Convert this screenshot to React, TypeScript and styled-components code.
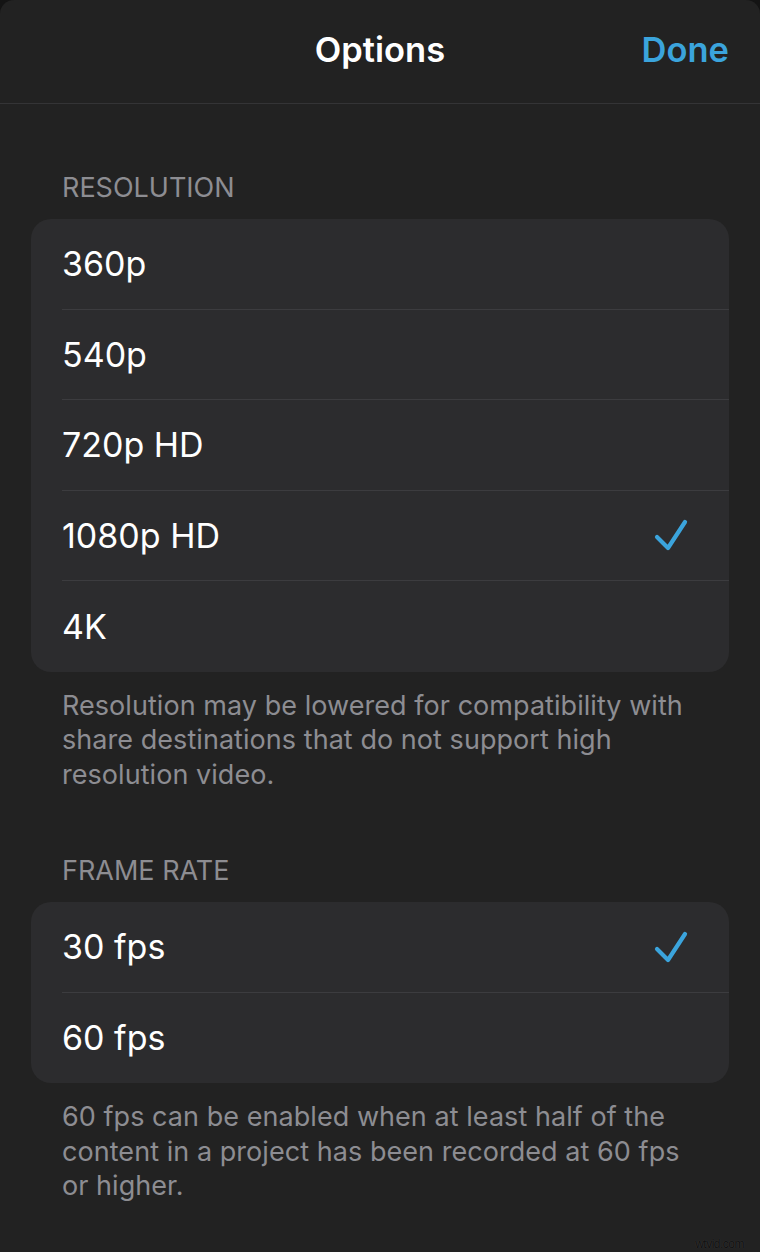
import React from "react";
import styled, { createGlobalStyle } from "styled-components";

const Global = createGlobalStyle`
  html, body { margin: 0; padding: 0; background: #141414; }
  body { font-family: Inter, "Noto Sans", "Liberation Sans", sans-serif; -webkit-font-smoothing: antialiased; }
  * { box-sizing: border-box; }
`;

const Sheet = styled.div`
  position: relative;
  min-height: 1252px;
  background: #222222;
  border-radius: 14px 14px 0 0;
  overflow: hidden;
`;

const NavBar = styled.header`
  height: 104px;
  display: grid;
  grid-template-columns: 1fr auto 1fr;
  align-items: center;
  padding: 0 31px 4px 31px;
  border-bottom: 1.5px solid #343436;
`;

const Title = styled.h1`
  grid-column: 2;
  margin: 0;
  font-size: 34.5px;
  font-weight: 600;
  color: #ffffff;
  letter-spacing: 0;
`;

const DoneButton = styled.button`
  grid-column: 3;
  justify-self: end;
  background: none;
  border: none;
  padding: 0;
  font-family: inherit;
  font-size: 34.5px;
  font-weight: 600;
  color: #3ba4dc;
  letter-spacing: 0;
`;

const Content = styled.main`
  padding: 68px 31px 0 31px;
  display: flex;
  flex-direction: column;
`;

const Section = styled.section<{ $gapTop?: number }>`
  display: flex;
  flex-direction: column;
  margin-top: ${(p) => p.$gapTop ?? 0}px;
`;

const SectionLabel = styled.div`
  padding-left: 31px;
  font-size: 27px;
  line-height: 32px;
  color: #8d8d92;
  letter-spacing: 0;
  margin-bottom: 15px;
`;

const Card = styled.div`
  background: #2c2c2e;
  border-radius: 20px;
  overflow: hidden;
`;

const Row = styled.div<{ $last?: boolean }>`
  height: 90.5px;
  margin-left: 31px;
  padding-right: 40px;
  display: flex;
  align-items: center;
  justify-content: space-between;
  border-bottom: ${(p) => (p.$last ? "none" : "1.5px solid #3c3c3f")};
`;

const RowLabel = styled.span`
  font-size: 34px;
  color: #ffffff;
  letter-spacing: 0;
`;

const Footer = styled.p`
  margin: 17px 0 0 0;
  padding: 0 31px;
  font-size: 27px;
  line-height: 34.5px;
  color: #8d8d92;
  letter-spacing: 0.05px;
`;

const Watermark = styled.div`
  position: absolute;
  right: 16px;
  bottom: 1px;
  font-family: "Liberation Sans", sans-serif;
  font-size: 12px;
  color: #111;
  text-shadow: 0 0 1px rgba(255, 255, 255, 0.15);
  letter-spacing: -0.5px;
`;

const Check = () => (
  <svg width="36" height="34" viewBox="0 0 36 34" fill="none">
    <polyline
      points="4,19 15,30 32,4"
      stroke="#3ba4dc"
      strokeWidth="4.2"
      strokeLinecap="round"
      strokeLinejoin="round"
    />
  </svg>
);

type Option = { label: string; selected?: boolean };

const resolutions: Option[] = [
  { label: "360p" },
  { label: "540p" },
  { label: "720p HD" },
  { label: "1080p HD", selected: true },
  { label: "4K" },
];

const frameRates: Option[] = [
  { label: "30 fps", selected: true },
  { label: "60 fps" },
];

const OptionList = ({ items }: { items: Option[] }) => (
  <Card>
    {items.map((o, i) => (
      <Row key={o.label} $last={i === items.length - 1}>
        <RowLabel>{o.label}</RowLabel>
        {o.selected && <Check />}
      </Row>
    ))}
  </Card>
);

export default function App() {
  return (
    <>
      <Global />
      <Sheet>
        <NavBar>
          <Title>Options</Title>
          <DoneButton>Done</DoneButton>
        </NavBar>
        <Content>
          <Section>
            <SectionLabel>RESOLUTION</SectionLabel>
            <OptionList items={resolutions} />
            <Footer>
              Resolution may be lowered for compatibility with share destinations that do not support high
              resolution video.
            </Footer>
          </Section>
          <Section $gapTop={63}>
            <SectionLabel>FRAME RATE</SectionLabel>
            <OptionList items={frameRates} />
            <Footer>
              60 fps can be enabled when at least half of the content in a project has been recorded at 60 fps
              or higher.
            </Footer>
          </Section>
        </Content>
        <Watermark>wtvid.com</Watermark>
      </Sheet>
    </>
  );
}
